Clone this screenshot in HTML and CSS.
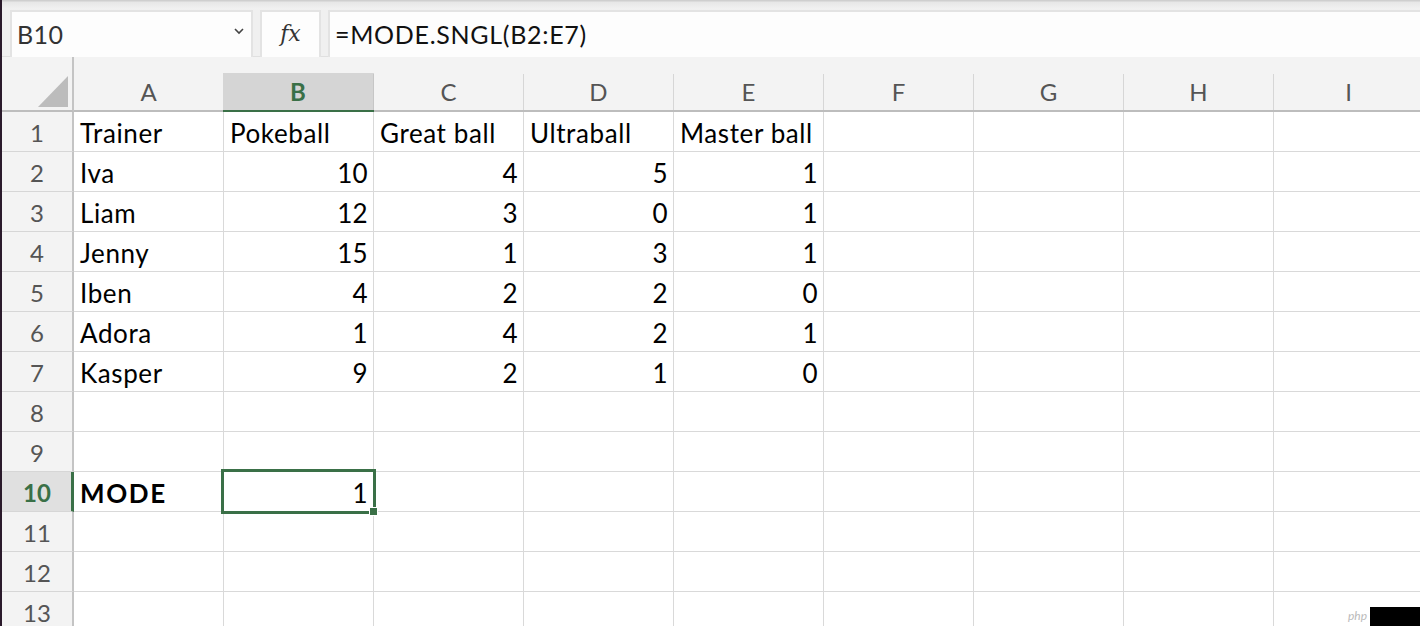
FILE: index.html
```html
<!DOCTYPE html>
<html>
<head>
<meta charset="utf-8">
<link rel="stylesheet" href="styles.css">
</head>
<body>
<div class="app">
  <div class="toolbar">
    <div class="namebox">
      <span class="name">B10</span>
      <svg class="chev" width="12" height="8" viewBox="0 0 12 8"><path d="M2 2 L6 6 L10 2" fill="none" stroke="#444" stroke-width="1.6"/></svg>
    </div>
    <div class="fxbox"><span class="fx">fx</span></div>
    <div class="formula">=MODE.SNGL(B2:E7)</div>
  </div>
  <div class="sheet">
    <div class="corner"><svg width="30" height="31" viewBox="0 0 30 31"><polygon points="30,0 30,31 0,31" fill="#bcbcbc"/></svg></div>
    <div class="colhead"><span>A</span></div>
    <div class="colhead sel"><span>B</span></div>
    <div class="colhead"><span>C</span></div>
    <div class="colhead"><span>D</span></div>
    <div class="colhead"><span>E</span></div>
    <div class="colhead"><span>F</span></div>
    <div class="colhead"><span>G</span></div>
    <div class="colhead"><span>H</span></div>
    <div class="colhead"><span>I</span></div>

    <div class="rowhead">1</div>
    <div class="cell">Trainer</div><div class="cell">Pokeball</div><div class="cell">Great ball</div><div class="cell">Ultraball</div><div class="cell">Master ball</div><div class="cell"></div><div class="cell"></div><div class="cell"></div><div class="cell"></div>

    <div class="rowhead">2</div>
    <div class="cell">Iva</div><div class="cell num">10</div><div class="cell num">4</div><div class="cell num">5</div><div class="cell num">1</div><div class="cell"></div><div class="cell"></div><div class="cell"></div><div class="cell"></div>

    <div class="rowhead">3</div>
    <div class="cell">Liam</div><div class="cell num">12</div><div class="cell num">3</div><div class="cell num">0</div><div class="cell num">1</div><div class="cell"></div><div class="cell"></div><div class="cell"></div><div class="cell"></div>

    <div class="rowhead">4</div>
    <div class="cell">Jenny</div><div class="cell num">15</div><div class="cell num">1</div><div class="cell num">3</div><div class="cell num">1</div><div class="cell"></div><div class="cell"></div><div class="cell"></div><div class="cell"></div>

    <div class="rowhead">5</div>
    <div class="cell">Iben</div><div class="cell num">4</div><div class="cell num">2</div><div class="cell num">2</div><div class="cell num">0</div><div class="cell"></div><div class="cell"></div><div class="cell"></div><div class="cell"></div>

    <div class="rowhead">6</div>
    <div class="cell">Adora</div><div class="cell num">1</div><div class="cell num">4</div><div class="cell num">2</div><div class="cell num">1</div><div class="cell"></div><div class="cell"></div><div class="cell"></div><div class="cell"></div>

    <div class="rowhead">7</div>
    <div class="cell">Kasper</div><div class="cell num">9</div><div class="cell num">2</div><div class="cell num">1</div><div class="cell num">0</div><div class="cell"></div><div class="cell"></div><div class="cell"></div><div class="cell"></div>

    <div class="rowhead">8</div>
    <div class="cell"></div><div class="cell"></div><div class="cell"></div><div class="cell"></div><div class="cell"></div><div class="cell"></div><div class="cell"></div><div class="cell"></div><div class="cell"></div>

    <div class="rowhead">9</div>
    <div class="cell"></div><div class="cell"></div><div class="cell"></div><div class="cell"></div><div class="cell"></div><div class="cell"></div><div class="cell"></div><div class="cell"></div><div class="cell"></div>

    <div class="rowhead sel">10</div>
    <div class="cell bold">MODE</div><div class="cell num active">1</div><div class="cell"></div><div class="cell"></div><div class="cell"></div><div class="cell"></div><div class="cell"></div><div class="cell"></div><div class="cell"></div>

    <div class="rowhead">11</div>
    <div class="cell"></div><div class="cell"></div><div class="cell"></div><div class="cell"></div><div class="cell"></div><div class="cell"></div><div class="cell"></div><div class="cell"></div><div class="cell"></div>

    <div class="rowhead">12</div>
    <div class="cell"></div><div class="cell"></div><div class="cell"></div><div class="cell"></div><div class="cell"></div><div class="cell"></div><div class="cell"></div><div class="cell"></div><div class="cell"></div>

    <div class="rowhead">13</div>
    <div class="cell"></div><div class="cell"></div><div class="cell"></div><div class="cell"></div><div class="cell"></div><div class="cell"></div><div class="cell"></div><div class="cell"></div><div class="cell"></div>
  </div>
  <div class="watermark"><span class="wm-text">php</span><span class="wm-box"></span></div>
</div>
</body>
</html>
```

FILE: styles.css
```css
html, body {
  margin: 0;
  padding: 0;
  height: 100%;
  overflow: hidden;
  background: #ffffff;
}
body {
  border-left: 2px solid #2a1a2b;
  font-family: Lato, "Liberation Sans", sans-serif;
}
.app {
  position: relative;
  height: 626px;
  overflow: hidden;
}
.toolbar {
  display: flex;
  gap: 7px;
  height: 57px;
  box-sizing: border-box;
  padding: 10px 0 0 8px;
  background: linear-gradient(#cfcfcf 0px, #cfcfcf 1px, #e7e7e7 2px, #f1f1f1 9px, #f0f0f0 10px, #f0f0f0 100%);
  border-bottom: 1px solid #e0e0e0;
}
.namebox, .fxbox, .formula {
  background: #fdfdfd;
  border: 2px solid #e3e3e3;
  border-bottom: 0;
  box-sizing: border-box;
  height: 47px;
  display: flex;
  align-items: center;
}
.namebox {
  width: 243px;
  justify-content: space-between;
  padding: 0 6px 2px 5px;
}
.name {
  font-size: 25px;
  color: #333;
  letter-spacing: 0.4px;
}
.chev { margin-top: -6px; }
.fxbox {
  width: 61px;
  justify-content: center;
}
.fx {
  font-family: "DejaVu Serif", "Liberation Serif", serif;
  font-style: italic;
  font-size: 22px;
  color: #333;
  padding-bottom: 2px;
}
.formula {
  flex: 1;
  padding: 0 5px 2px;
  font-size: 25px;
  color: #111;
  letter-spacing: 0.7px;
  border-right: 0;
}
.sheet {
  display: grid;
  grid-template-columns: 72px repeat(9, 150px);
  grid-template-rows: 55px repeat(13, 40px);
}
.corner {
  background: #f3f3f3;
  border-right: 2px solid #c4c4c4;
  border-bottom: 2px solid #bdbdbd;
  display: flex;
  align-items: flex-end;
  justify-content: flex-end;
  padding: 0 4px 3px 0;
}
.corner svg { display: block; }
.colhead {
  background: #f3f3f3;
  border-bottom: 2px solid #bdbdbd;
  padding-top: 17px;
  display: flex;
}
.colhead span {
  flex: 1;
  display: flex;
  align-items: center;
  justify-content: center;
  border-right: 1px solid #d6d6d6;
  font-size: 24px;
  color: #555;
  padding-bottom: 2px;
}
.colhead.sel span {
  background: #d5d5d5;
  color: #3a7047;
  font-weight: 700;
  border-right-color: #c6c6c6;
  margin-left: -1px;
  box-shadow: 0 2px 0 #3a7047, 0 -1px 0 #d5d5d5;
  position: relative;
}
.rowhead {
  background: #f3f3f3;
  border-right: 2px solid #c4c4c4;
  border-bottom: 1px solid #d6d6d6;
  display: flex;
  align-items: center;
  justify-content: center;
  font-size: 24px;
  color: #555;
  padding-top: 2px;
}
.rowhead.sel {
  background: #e0e0e0;
  color: #3a7047;
  font-weight: 700;
  border-right: 3px solid #3a7047;
  padding-left: 1px;
}
.cell {
  border-right: 1px solid #d9d9d9;
  border-bottom: 1px solid #d9d9d9;
  display: flex;
  align-items: center;
  padding: 2px 6px 0 6px;
  font-size: 26px;
  letter-spacing: 0.6px;
  color: #000;
  white-space: nowrap;
  overflow: visible;
}
.cell.num {
  justify-content: flex-end;
  padding-right: 5px;
  letter-spacing: 0.3px;
}
.cell.bold {
  font-weight: 700;
  letter-spacing: 1.6px;
}
.cell.active {
  position: relative;
}
.cell.active::before {
  content: "";
  position: absolute;
  left: -3px;
  top: -3px;
  right: -3px;
  bottom: -3px;
  border: 3px solid #3a7047;
  pointer-events: none;
}
.cell.active::after {
  content: "";
  position: absolute;
  right: -5px;
  bottom: -5px;
  width: 7px;
  height: 7px;
  background: #3a7047;
  border: 1px solid #ffffff;
}
.watermark {
  position: absolute;
  right: 0;
  bottom: 0;
  display: flex;
  align-items: flex-end;
}
.wm-text {
  font-size: 12px;
  color: #bbb;
  font-style: italic;
  margin-right: 3px;
  padding-bottom: 3px;
}
.wm-box {
  width: 50px;
  height: 19px;
  background: #000;
}
```
